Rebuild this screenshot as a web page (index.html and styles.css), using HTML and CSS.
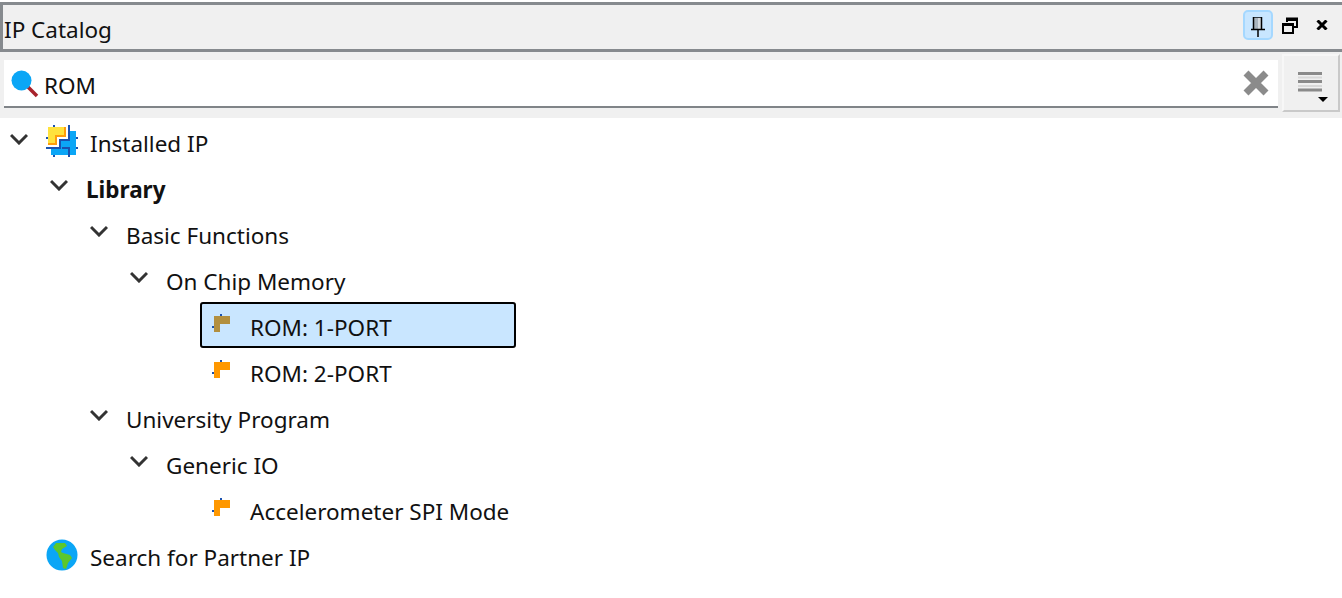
FILE: index.html
```html
<!DOCTYPE html>
<html lang="en">

<head>
    <meta charset="utf-8">
    <title>IP Catalog</title>
    <link rel="stylesheet" href="styles.css">
</head>

<body>
    <svg class="defs" width="0" height="0">
        <symbol id="chevron" viewBox="0 0 18 12">
            <path d="M1 2 L9 10 L17 2" fill="none" stroke="#333" stroke-width="3"/>
        </symbol>
        <symbol id="core" viewBox="0 0 20 20">
            <rect x="8" y="0" width="2" height="2" fill="#1a52b0"/>
            <rect x="0" y="12" width="2" height="2" fill="#1a52b0"/>
            <path d="M2 2 H18 V10 H8 V18 H2 Z" fill="currentColor"/>
        </symbol>
    </svg>

    <header class="title_bar">
        <span class="title">IP Catalog</span>
        <div class="title_buttons">
            <button class="win_button pin_button">
                <svg width="14" height="20" viewBox="0 0 14 20">
                    <path d="M3 1 H11 V12 H3 Z" fill="#a9b4bd"/>
                    <path d="M7 1 H10 V12 H7 Z" fill="#d5dade"/>
                    <path d="M2 0 H11 M2.500 0 V12 M10.500 0 V12 M0 12.500 H14 M7 12 V20" fill="none" stroke="#000" stroke-width="1.500"/>
                </svg>
            </button>
            <button class="win_button">
                <svg width="16" height="17" viewBox="0 0 16 17">
                    <path d="M5 5 V1.500 H15 V10 H12" fill="none" stroke="#000" stroke-width="2"/>
                    <path d="M5 2.500 H15" stroke="#000" stroke-width="3"/>
                    <path d="M1 7 H11 V16 H1 Z" fill="none" stroke="#000" stroke-width="2"/>
                    <path d="M1 7.500 H11" stroke="#000" stroke-width="3"/>
                </svg>
            </button>
            <button class="win_button">
                <svg width="12" height="10" viewBox="0 0 12 10">
                    <path d="M1.500 0.500 L10.500 9.500 M10.500 0.500 L1.500 9.500" fill="none" stroke="#000" stroke-width="3"/>
                </svg>
            </button>
        </div>
    </header>

    <div class="toolbar">
        <div class="search">
            <svg class="search_icon" width="28" height="28" viewBox="0 0 28 28">
                <path d="M17 17 L26 26" stroke="#a8232c" stroke-width="3.500"/>
                <circle cx="10.500" cy="10.500" r="10" fill="#0ba6f6"/>
            </svg>
            <span class="search_text">ROM</span>
            <svg class="clear_icon" width="28" height="28" viewBox="0 0 28 28">
                <path d="M4 4 L24 24 M24 4 L4 24" fill="none" stroke="#8b8b8b" stroke-width="7"/>
            </svg>
        </div>
        <button class="menu_button">
            <svg width="32" height="32" viewBox="0 0 32 32">
                <path d="M1 2.500 H25 M1 10.500 H25 M1 19 H25" stroke="#8a8a8a" stroke-width="3"/>
                <path d="M1 6.500 H25 M1 15 H25" stroke="#d8d8d8" stroke-width="2"/>
                <path d="M21 26 H31 L26 31 Z" fill="#000"/>
            </svg>
        </button>
    </div>

    <main class="tree">
        <div class="row level_0">
            <svg class="chevron"><use href="#chevron"/></svg>
            <svg class="row_icon" width="32" height="32" viewBox="0 0 32 32">
                <path d="M24 6 H30 V30 H5 V24 H14 V16 H24 Z" fill="#0ba6f6"/>
                <path d="M2 2 H20 V12 H11 V20 H2 Z" fill="#ff9d0a"/>
                <path d="M2 2 H18 V10 H9 V18 H2 Z" fill="#ffe23d"/>
                <path d="M7 0 H9 V2 H7 Z M0 12 H2 V14 H0 Z M30 12 H32 V14 H30 Z M30 22 H32 V24 H30 Z M7 30 H9 V32 H7 Z" fill="#1a52b0"/>
                <path d="M23 0 V15 H14 V23 H0 M16 23 H23 V32" fill="none" stroke="#1a52b0" stroke-width="2"/>
            </svg>
            <span class="label">Installed IP</span>
        </div>
        <div class="row level_1">
            <svg class="chevron"><use href="#chevron"/></svg>
            <span class="label bold">Library</span>
        </div>
        <div class="row level_2">
            <svg class="chevron"><use href="#chevron"/></svg>
            <span class="label">Basic Functions</span>
        </div>
        <div class="row level_3">
            <svg class="chevron"><use href="#chevron"/></svg>
            <span class="label">On Chip Memory</span>
        </div>
        <div class="row leaf selected">
            <svg class="leaf_icon" width="20" height="20"><use href="#core"/></svg>
            <span class="label">ROM: 1-PORT</span>
        </div>
        <div class="row leaf">
            <svg class="leaf_icon" width="20" height="20"><use href="#core"/></svg>
            <span class="label">ROM: 2-PORT</span>
        </div>
        <div class="row level_2">
            <svg class="chevron"><use href="#chevron"/></svg>
            <span class="label">University Program</span>
        </div>
        <div class="row level_3">
            <svg class="chevron"><use href="#chevron"/></svg>
            <span class="label">Generic IO</span>
        </div>
        <div class="row leaf">
            <svg class="leaf_icon" width="20" height="20"><use href="#core"/></svg>
            <span class="label">Accelerometer SPI Mode</span>
        </div>
        <div class="row level_0 no_chevron">
            <svg class="row_icon" width="32" height="32" viewBox="0 0 32 32">
                <circle cx="16" cy="16" r="15.500" fill="#0ba6f6"/>
                <path d="M10 4 H19 L21 7 L16 10 L15 13 L17 14 L24 16 L26 19 L22 24 L20 30 L17 29 L16 22 L13 18 L12 14 L9 11 L7 8 Z" fill="#5cc72b"/>
            </svg>
            <span class="label">Search for Partner IP</span>
        </div>
    </main>
</body>

</html>
```

FILE: styles.css
```css
* {
    box-sizing: border-box;
}

html {
    background: white;
}

body {
    margin: 0;
    height: 598px;
    overflow: hidden;
    padding-top: 2px;
    font-family: "Noto Sans", sans-serif;
    font-size: 22.5px;
    color: #111;
}

button {
    padding: 0;
    background: none;
    border: none;
}

.defs {
    position: absolute;
}

.title_bar {
    display: flex;
    justify-content: space-between;
    align-items: center;
    height: 50px;
    padding-left: 1px;
    background: #f0f0f0;
    border: 3px solid #868a8e;
    border-right: none;
}

.title {
    padding-top: 4px;
}

.title_buttons {
    display: flex;
    align-items: center;
    padding: 0 5px 4px 0;
}

.win_button {
    display: flex;
    justify-content: center;
    align-items: center;
    width: 30px;
    height: 30px;
    margin-left: 2px;
}

.pin_button {
    background: #c8e6ff;
    border: 2px solid #a5d8ff;
    border-radius: 5px;
    padding-top: 4px;
}

.toolbar {
    display: flex;
    height: 66px;
    padding: 2px 2px 0 4px;
    background: #f0f0f0;
}

.search {
    display: flex;
    align-items: center;
    width: 1274px;
    height: 48px;
    margin-top: 6px;
    padding: 0 8px 0 7px;
    background: white;
    border-bottom: 2px solid #808488;
}

.search_icon {
    margin-top: 2px;
}

.search_text {
    margin-left: 5px;
    padding-top: 4px;
}

.clear_icon {
    margin-left: auto;
}

.menu_button {
    display: flex;
    justify-content: center;
    align-items: center;
    width: 58px;
    height: 58px;
    margin-left: 4px;
    padding: 8px 0 0 4px;
    background: #f0f0f0;
    border: 2px solid #f7f7f7;
    border-right-color: #c9c9c9;
    border-bottom-color: #c9c9c9;
}

.tree {
    padding-top: 2px;
}

.row {
    display: flex;
    align-items: center;
    height: 46px;
}

.chevron {
    flex: none;
    width: 18px;
    height: 12px;
    margin-top: -8px;
}

.row_icon {
    flex: none;
    margin: -4px 12px 0 18px;
}

.level_0 {
    padding-left: 10px;
}

.level_0.no_chevron {
    padding-left: 28px;
}

.level_1 {
    padding-left: 50px;
}

.level_2 {
    padding-left: 90px;
}

.level_3 {
    padding-left: 130px;
}

.level_1 .label,
.level_2 .label,
.level_3 .label {
    margin-left: 18px;
}

.leaf {
    width: 316px;
    margin-left: 200px;
    padding-left: 12px;
}

.leaf_icon {
    flex: none;
    margin: -6px 18px 0 0;
    color: #ff9800;
}

.selected {
    margin-top: -2px;
    margin-bottom: 2px;
    padding: 4px 0 0 10px;
    background: #c9e6ff;
    border: 2px solid #000;
    border-radius: 3px;
}

.selected .leaf_icon {
    color: #b28f3e;
}

.bold {
    font-weight: 700;
}
```
